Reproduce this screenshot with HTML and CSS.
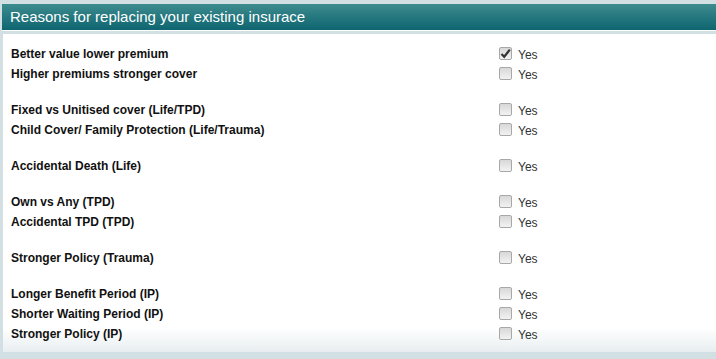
FILE: index.html
```html
<!DOCTYPE html>
<html lang="en">
<head>
    <meta charset="UTF-8">
    <title>Replacement Reasons</title>
    <link rel="stylesheet" href="styles.css">
</head>
<body>

    <div class="section">
        <div class="section-header">Reasons for replacing your existing insurace</div>

        <div class="section-body">
            <div class="group">
                <div class="row"><span class="label">Better value lower premium</span><span class="check checked"><svg width="11" height="11" viewBox="0 0 11 11"><path d="M1.5 6 L4.2 8.8 L9.8 1.6" fill="none" stroke="#333" stroke-width="2.2"/></svg></span><span class="yes">Yes</span></div>
                <div class="row"><span class="label">Higher premiums stronger cover</span><span class="check"></span><span class="yes">Yes</span></div>
            </div>
            <div class="group">
                <div class="row"><span class="label">Fixed vs Unitised cover (Life/TPD)</span><span class="check"></span><span class="yes">Yes</span></div>
                <div class="row"><span class="label">Child Cover/ Family Protection (Life/Trauma)</span><span class="check"></span><span class="yes">Yes</span></div>
            </div>
            <div class="group">
                <div class="row"><span class="label">Accidental Death (Life)</span><span class="check"></span><span class="yes">Yes</span></div>
            </div>
            <div class="group">
                <div class="row"><span class="label">Own vs Any (TPD)</span><span class="check"></span><span class="yes">Yes</span></div>
                <div class="row"><span class="label">Accidental TPD (TPD)</span><span class="check"></span><span class="yes">Yes</span></div>
            </div>
            <div class="group">
                <div class="row"><span class="label">Stronger Policy (Trauma)</span><span class="check"></span><span class="yes">Yes</span></div>
            </div>
            <div class="group">
                <div class="row"><span class="label">Longer Benefit Period (IP)</span><span class="check"></span><span class="yes">Yes</span></div>
                <div class="row"><span class="label">Shorter Waiting Period (IP)</span><span class="check"></span><span class="yes">Yes</span></div>
                <div class="row"><span class="label">Stronger Policy (IP)</span><span class="check"></span><span class="yes">Yes</span></div>
            </div>
        </div>
    </div>

</body>
</html>
```

FILE: styles.css
```css
body {
    margin: 0;
    background-color: #d2e0e4;
    font-family: "Liberation Sans", Arial, sans-serif;
    height: 359px;
    overflow: hidden;
}

.section {
    padding: 4px 0 0 2px;
}

.section-header {
    height: 26px;
    line-height: 26px;
    padding-left: 8px;
    color: #ffffff;
    font-size: 15px;
    background: linear-gradient(to bottom, #3d8b8e, #0e6570);
    border-bottom: 1px solid #ffffff;
}

.section-body {
    margin: 3px 0 0 1px;
    padding: 9px 0 9px 8px;
    background: linear-gradient(to bottom, #ffffff 0, #ffffff 294px, #e8eef0 100%);
}

.group {
    margin-bottom: 16px;
}

.group:last-child {
    margin-bottom: 0;
}

.row {
    display: flex;
    align-items: center;
    height: 20px;
}

.label {
    width: 488px;
    margin-top: 2px;
    font-size: 12px;
    font-weight: bold;
    color: #111111;
}

.check {
    width: 11px;
    height: 11px;
    margin-top: 1px;
    border: 1px solid #a8a8a8;
    border-radius: 2px;
    background: linear-gradient(to bottom, #d8d8d8, #f2f2f2);
    display: flex;
    align-items: center;
    justify-content: center;
}

.yes {
    margin-left: 6px;
    margin-top: 4px;
    font-size: 12px;
    color: #333333;
}
```
